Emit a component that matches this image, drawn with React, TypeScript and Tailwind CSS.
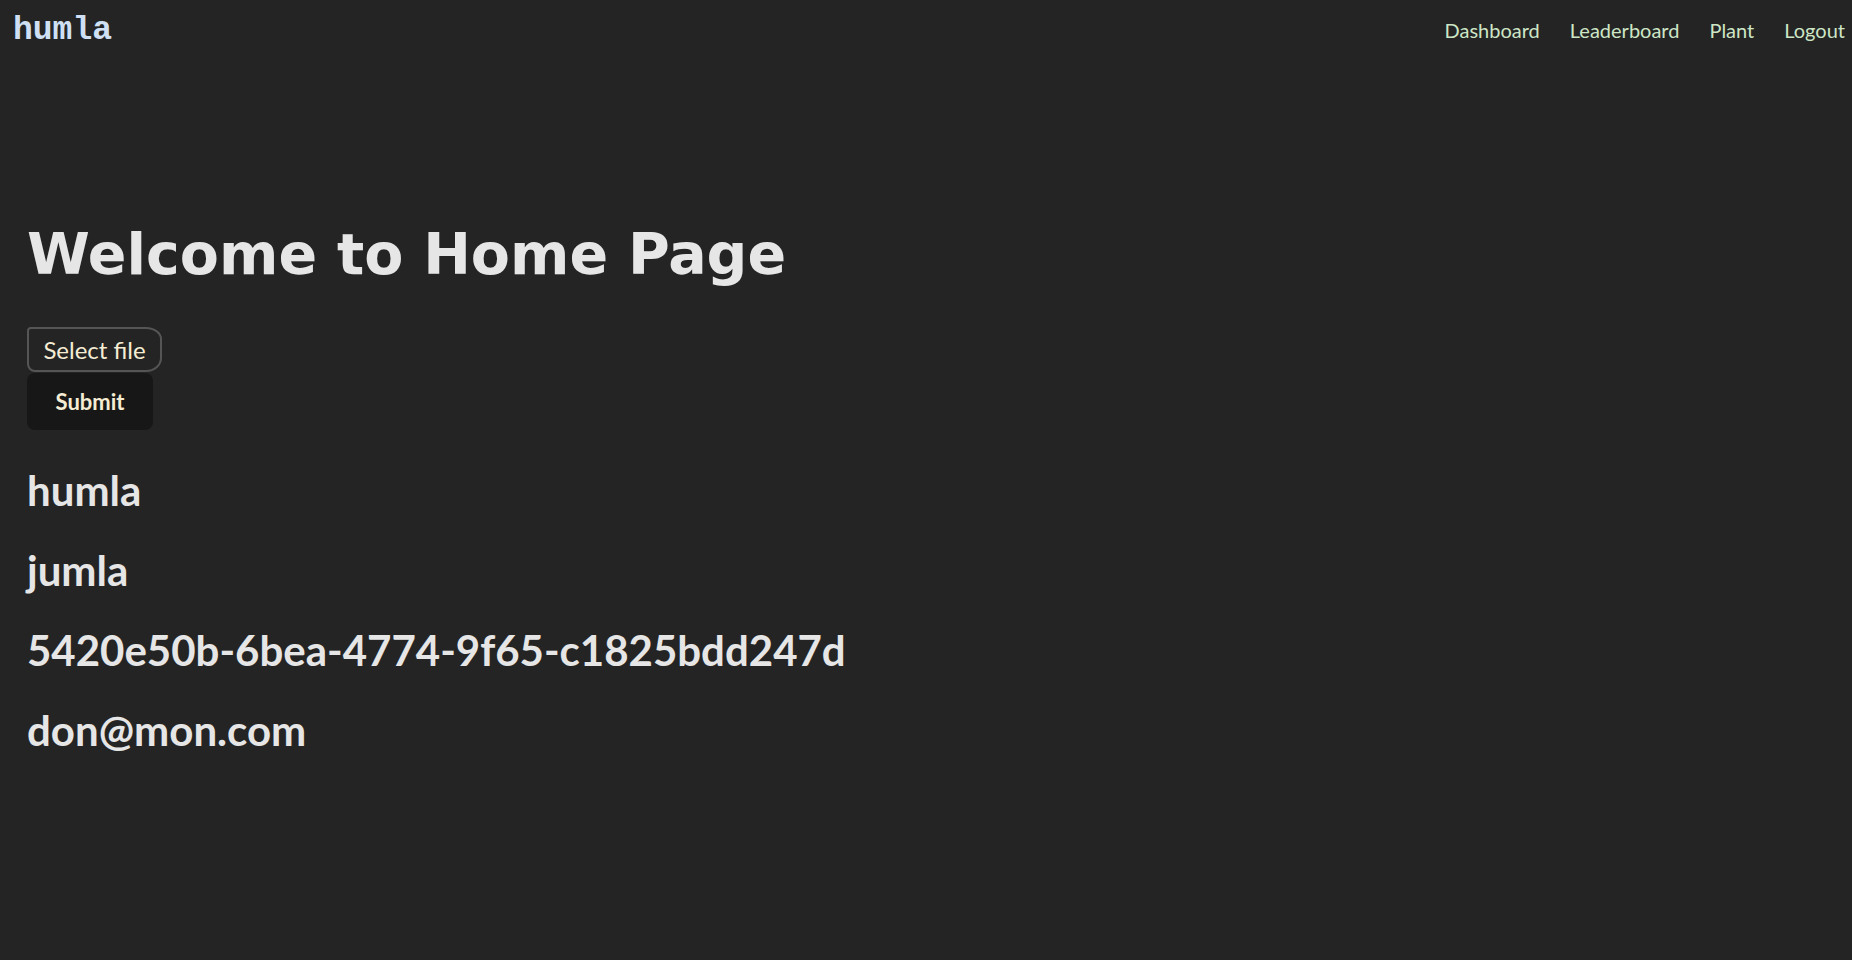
import React from "react";

export default function App() {
  const rows = ["humla", "jumla", "5420e50b-6bea-4774-9f65-c1825bdd247d", "don@mon.com"];
  return (
    <div className="min-h-[960px] w-full bg-[#242424] text-[#e6e6e6]">
      <header className="flex h-[60px] items-center justify-between pl-[13px] pr-[7px]">
        <div className="text-[33px] font-bold leading-none text-[#cfe0f4] [font-family:'Liberation_Mono','Courier_New',monospace]">
          humla
        </div>
        <nav className="flex items-center gap-[30px] text-[20px] leading-none text-[#cde6c6] [font-family:Lato,sans-serif]">
          <span>Dashboard</span>
          <span>Leaderboard</span>
          <span>Plant</span>
          <span>Logout</span>
        </nav>
      </header>
      <main className="flex flex-col items-start pl-[27px] pt-[166px]">
        <h1 className="text-[57px] font-bold leading-none text-[#e6e6e6] [font-family:'DejaVu_Sans',sans-serif]">
          Welcome to Home Page
        </h1>
        <div className="mt-[44px] flex h-[45px] w-[135px] items-center justify-center border-2 border-[#555555] text-[24px] text-[#f5ecd4] [border-radius:4px_16px_16px_8px/4px_12px_14px_8px] [font-family:Lato,sans-serif]">
          Select file
        </div>
        <button className="mt-[1px] flex h-[57px] w-[126px] items-center justify-center rounded-[8px] bg-[#171717] text-[22px] font-bold text-[#f5ecd4] [font-family:Lato,sans-serif]">
          Submit
        </button>
        <div className="mt-[20px] flex flex-col">
          {rows.map((r) => (
            <div key={r} className="h-[80px] text-[42px] font-bold leading-[80px] text-[#e6e6e6] [font-family:Lato,sans-serif]">
              {r}
            </div>
          ))}
        </div>
      </main>
    </div>
  );
}
